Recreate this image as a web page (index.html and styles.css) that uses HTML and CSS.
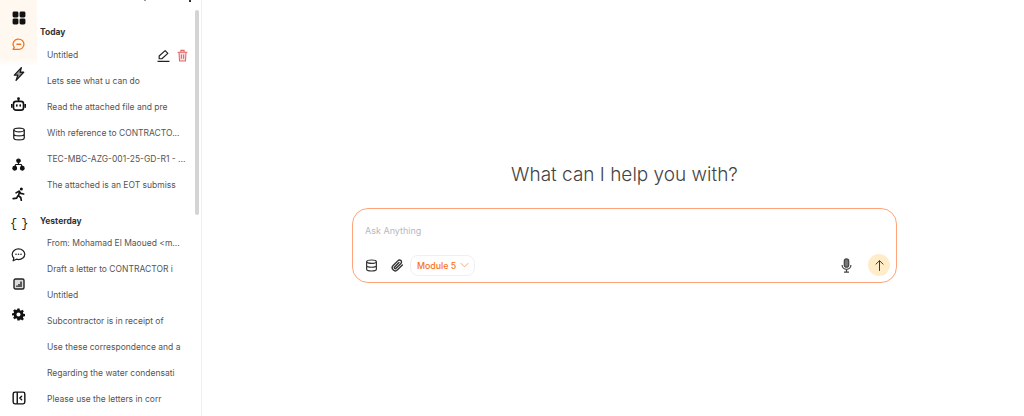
FILE: index.html
```html
<!DOCTYPE html>
<html lang="en">
<head>
<meta charset="utf-8">
<title>Chat</title>
<link rel="stylesheet" href="styles.css">
</head>
<body>
<div class="app">
  <nav class="rail">
    <div class="rail-top">
      <a class="rail-btn first"><svg viewBox="0 0 24 24" width="14" height="14"><rect x="1" y="1" width="10" height="10" rx="2.500" fill="#111"/><rect x="13" y="1" width="10" height="10" rx="2.500" fill="#111"/><rect x="1" y="13" width="10" height="10" rx="2.500" fill="#111"/><rect x="13" y="13" width="10" height="10" rx="2.500" fill="#111"/></svg></a>
      <a class="rail-btn active"><svg viewBox="0 0 24 24" width="13" height="13" fill="none" stroke="#f97316" stroke-width="2.400"><path d="M12.500 2a9.500 9.500 0 0 1 0 19H2l2.200-3.600A9.500 9.500 0 0 1 12.500 2z" stroke-linejoin="round"/><path d="M9 11.500h7" stroke-linecap="round" stroke-dasharray="1.800 .8"/></svg></a>
      <a class="rail-btn"><svg viewBox="0 0 24 24" width="14" height="14" fill="#999" stroke="#1a1a1a" stroke-width="2.200" stroke-linejoin="round"><path d="M16 1 4 14h6L7 23l13-14h-6z"/></svg></a>
      <a class="rail-btn"><svg viewBox="0 0 24 24" width="15" height="15" fill="none" stroke="#111" stroke-width="2.600"><rect x="4" y="7" width="16" height="14" rx="4"/><path d="M12 7V3M1.300 11v6M22.700 11v6"/><circle cx="12" cy="2.500" r="1" fill="#111"/><rect x="8" y="11.500" width="2.600" height="4" rx="1" fill="#111" stroke="none"/><rect x="13.400" y="11.500" width="2.600" height="4" rx="1" fill="#111" stroke="none"/></svg></a>
      <a class="rail-btn"><svg viewBox="0 0 24 24" width="14" height="14" fill="none" stroke="#222" stroke-width="2.200"><ellipse cx="12" cy="5" rx="9" ry="3.200"/><path d="M3 5v14c0 1.800 4 3.200 9 3.200s9-1.400 9-3.200V5M3 12c0 1.800 4 3.200 9 3.200s9-1.400 9-3.200"/></svg></a>
      <a class="rail-btn"><svg viewBox="0 0 24 24" width="13" height="13" fill="none" stroke="#111" stroke-width="2.200"><circle cx="12" cy="5" r="3.200" fill="#111"/><circle cx="5" cy="19" r="3.400" fill="#111"/><circle cx="19" cy="19" r="3.400" fill="#111"/><path d="M12 8v4M5 16l2-4h10l2 4"/></svg></a>
      <a class="rail-btn"><svg viewBox="0 0 24 24" width="14" height="14" fill="none" stroke="#111" stroke-width="2.800" stroke-linecap="round" stroke-linejoin="round"><circle cx="16" cy="3.500" r="2.600" fill="#111" stroke="none"/><path d="M7 10l5-3 3 4 5 1M13 8l-2 7 4 3 1 5M10 15l-2 4-6 1"/></svg></a>
      <a class="rail-btn braces">{ }</a>
      <a class="rail-btn"><svg viewBox="0 0 24 24" width="15" height="15" fill="none" stroke="#222" stroke-width="2"><path d="M12 3c5.500 0 10 3.700 10 8.500S17.500 20 12 20c-1.200 0-2.300-.2-3.400-.5L3.500 22l1-4.300A8 8 0 0 1 2 11.500C2 6.700 6.500 3 12 3z" stroke-linejoin="round"/><circle cx="8" cy="11.500" r="1.300" fill="#222" stroke="none"/><circle cx="12" cy="11.500" r="1.300" fill="#222" stroke="none"/><circle cx="16" cy="11.500" r="1.300" fill="#222" stroke="none"/></svg></a>
      <a class="rail-btn"><svg viewBox="0 0 24 24" width="12" height="12" fill="#ddd" stroke="#222" stroke-width="2.800"><rect x="2" y="2" width="20" height="20" rx="3"/><path d="M8 18v-3M12 18v-6M16 18V7" fill="none"/></svg></a>
      <a class="rail-btn"><svg viewBox="0 0 24 24" width="13" height="13"><path fill="#111" fill-rule="evenodd" d="M10 1h4l.6 3.100 1.900.8 2.600-1.800 2.800 2.800-1.800 2.600.8 1.900 3.100.6v4l-3.100.6-.8 1.900 1.800 2.600-2.800 2.800-2.600-1.800-1.900.8L14 23h-4l-.6-3.100-1.900-.8-2.600 1.800-2.800-2.800 1.800-2.600-.8-1.900L0 14v-4l3.100-.6.8-1.900L2.100 4.900l2.800-2.800 2.600 1.800 1.900-.8zM12 8.200a3.800 3.800 0 1 0 0 7.600 3.800 3.800 0 0 0 0-7.600z"/></svg></a>
    </div>
    <a class="rail-btn"><svg viewBox="0 0 24 24" width="14" height="14" fill="none" stroke="#111" stroke-width="2.400"><rect x="2" y="2" width="20" height="20" rx="3"/><path d="M9 2v20"/><path d="M16.500 9l-3 3 3 3" stroke-linecap="round"/></svg></a>
  </nav>

  <aside class="side">
    <div class="side-scroll">
      <div class="side-head">
        <span class="clip-dot"></span>
        <span class="clip-dot dark"></span>
      </div>
      <h3 class="group">Today</h3>
      <ul class="list">
        <li class="row"><span class="row-text">Untitled</span>
          <span class="row-actions">
            <svg viewBox="0 0 24 24" width="13" height="13" fill="none" stroke="#222" stroke-width="2.200"><path d="M15 3l5 5L9 18H4v-5zM1 23h22" stroke-linejoin="round"/></svg>
            <svg viewBox="0 0 24 24" width="13" height="13" fill="#fbdcdc" stroke="#e06a6a" stroke-width="2"><path d="M3 6h18M9 6V2.500h6V6M5.500 6l1 16h11l1-16M10 10v8M14 10v8"/></svg>
          </span>
        </li>
        <li class="row"><span class="row-text">Lets see what u can do</span></li>
        <li class="row"><span class="row-text">Read the attached file and pre</span></li>
        <li class="row"><span class="row-text">With reference to CONTRACTO...</span></li>
        <li class="row"><span class="row-text">TEC-MBC-AZG-001-25-GD-R1 - ...</span></li>
        <li class="row"><span class="row-text">The attached is an EOT submiss</span></li>
      </ul>
      <h3 class="group second">Yesterday</h3>
      <ul class="list">
        <li class="row"><span class="row-text">From: Mohamad El Maoued &lt;m...</span></li>
        <li class="row"><span class="row-text">Draft a letter to CONTRACTOR i</span></li>
        <li class="row"><span class="row-text">Untitled</span></li>
        <li class="row"><span class="row-text">Subcontractor is in receipt of</span></li>
        <li class="row"><span class="row-text">Use these correspondence and a</span></li>
        <li class="row"><span class="row-text">Regarding the water condensati</span></li>
        <li class="row"><span class="row-text">Please use the letters in corr</span></li>
      </ul>
    </div>
    <div class="scrollbar"></div>
  </aside>

  <main class="main">
    <h1 class="title">What can I help you with?</h1>
    <section class="composer">
      <div class="placeholder">Ask Anything</div>
      <div class="tools">
        <div class="tools-left">
          <svg viewBox="0 0 24 24" width="13" height="13" fill="none" stroke="#333" stroke-width="2.200"><ellipse cx="12" cy="5" rx="9" ry="3.200"/><path d="M3 5v14c0 1.800 4 3.200 9 3.200s9-1.400 9-3.200V5M3 12c0 1.800 4 3.200 9 3.200s9-1.400 9-3.200"/></svg>
          <svg class="clip" viewBox="0 0 24 24" width="13" height="13" fill="none" stroke="#333" stroke-width="2.600" stroke-linecap="round"><path d="M21 11l-9 9a5.500 5.500 0 0 1-8-8l9-9a3.700 3.700 0 0 1 5.300 5.200l-9 9a1.800 1.800 0 0 1-2.600-2.600l8-8"/></svg>
          <button class="module">Module 5 <svg viewBox="0 0 12 8" width="9" height="6" fill="none" stroke="#f4a27a" stroke-width="1.300"><path d="M1 1.500l5 5 5-5"/></svg></button>
        </div>
        <div class="tools-right">
          <svg viewBox="0 0 24 24" width="15" height="15" fill="none" stroke="#444" stroke-width="2"><rect x="8.500" y="1.500" width="7" height="13" rx="3.500" fill="#777"/><path d="M5 11a7 7 0 0 0 14 0M12 18v4M8 22.500h8"/></svg>
          <button class="send"><svg viewBox="0 0 24 24" width="13" height="13" fill="none" stroke="#333" stroke-width="1.800"><path d="M12 22V3M5 10l7-7 7 7"/></svg></button>
        </div>
      </div>
    </section>
  </main>
</div>
</body>
</html>
```

FILE: styles.css
```css
* { box-sizing: border-box; }
html, body { margin: 0; height: 100%; background: #fff; }
body { font-family: "Inter", "Noto Sans", sans-serif; overflow: hidden; }
.app { display: flex; width: 1024px; height: 416px; }

.rail {
  width: 37px;
  flex: none;
  display: flex;
  flex-direction: column;
  justify-content: space-between;
  align-items: center;
  padding: 8px 0 3px;
  background: linear-gradient(to bottom, #fff8f0 0, #fff8f0 58px, #fff 66px);
}
.rail-top { display: flex; flex-direction: column; align-items: center; }
.rail-btn {
  width: 37px;
  height: 30px;
  display: flex;
  align-items: center;
  justify-content: center;
}
.rail-btn.first { height: 20px; }
.rail-btn.active { margin-top: 1px; }
.rail-btn.braces { font: 400 12px "Liberation Mono", monospace; color: #222; letter-spacing: -1.500px; }

.side {
  position: relative;
  width: 165px;
  flex: none;
  border-right: 1px solid #eef0f4;
  overflow: hidden;
}
.side-scroll { padding: 0 0 0 3px; }
.side-head { height: 26px; display: flex; gap: 43px; padding-left: 104px; align-items: flex-start; }
.clip-dot { width: 2px; height: 1px; background: #999; }
.clip-dot.dark { width: 2px; height: 2px; background: #333; }
.group { margin: 0; height: 12px; font-size: 8.500px; line-height: 12px; font-weight: 700; color: #333; }
.group.second { margin-top: 17px; }
.list { list-style: none; margin: 4px 0 0; padding: 0 0 0 7px; }
.group.second + .list { margin-top: 3px; }
.row {
  height: 26px;
  display: flex;
  align-items: center;
  justify-content: space-between;
  padding-right: 10px;
  font-size: 8.500px;
  color: #555;
  white-space: nowrap;
}
.row-actions { display: flex; gap: 6px; margin-right: 2px; }
.scrollbar {
  position: absolute;
  left: 158px;
  top: 10px;
  width: 4px;
  height: 205px;
  border-radius: 2px;
  background: #d4d4d4;
}

.main {
  flex: 1;
  display: flex;
  flex-direction: column;
  align-items: center;
  padding: 163px 0 0 23px;
}
.title {
  margin: 0 0 21px;
  font-size: 19px;
  line-height: 24px;
  font-weight: 300;
  color: #444;
}
.composer {
  width: 545px;
  height: 75px;
  border: 1px solid #ffa37a;
  border-radius: 16px;
  padding: 16px 6px 6px 12px;
  display: flex;
  flex-direction: column;
  justify-content: space-between;
  background: #fff;
}
.placeholder { font-size: 9px; line-height: 12px; color: #b5b8c2; }
.tools { display: flex; justify-content: space-between; align-items: center; }
.tools-left { display: flex; align-items: center; gap: 13px; }
.tools-left .clip { margin-right: -7px; }
.tools-right { display: flex; align-items: center; gap: 14px; }
.module {
  height: 21px;
  display: flex;
  align-items: center;
  gap: 4px;
  padding: 0 5px 0 6px;
  border: 1px solid #eef0f4;
  border-radius: 8px;
  background: #fff;
  font: 500 8.800px "Inter", sans-serif;
  color: #f97316;
}
.send {
  width: 22px;
  height: 22px;
  padding: 0;
  border: 0;
  border-radius: 50%;
  background: #ffedc9;
  display: flex;
  align-items: center;
  justify-content: center;
}
```
